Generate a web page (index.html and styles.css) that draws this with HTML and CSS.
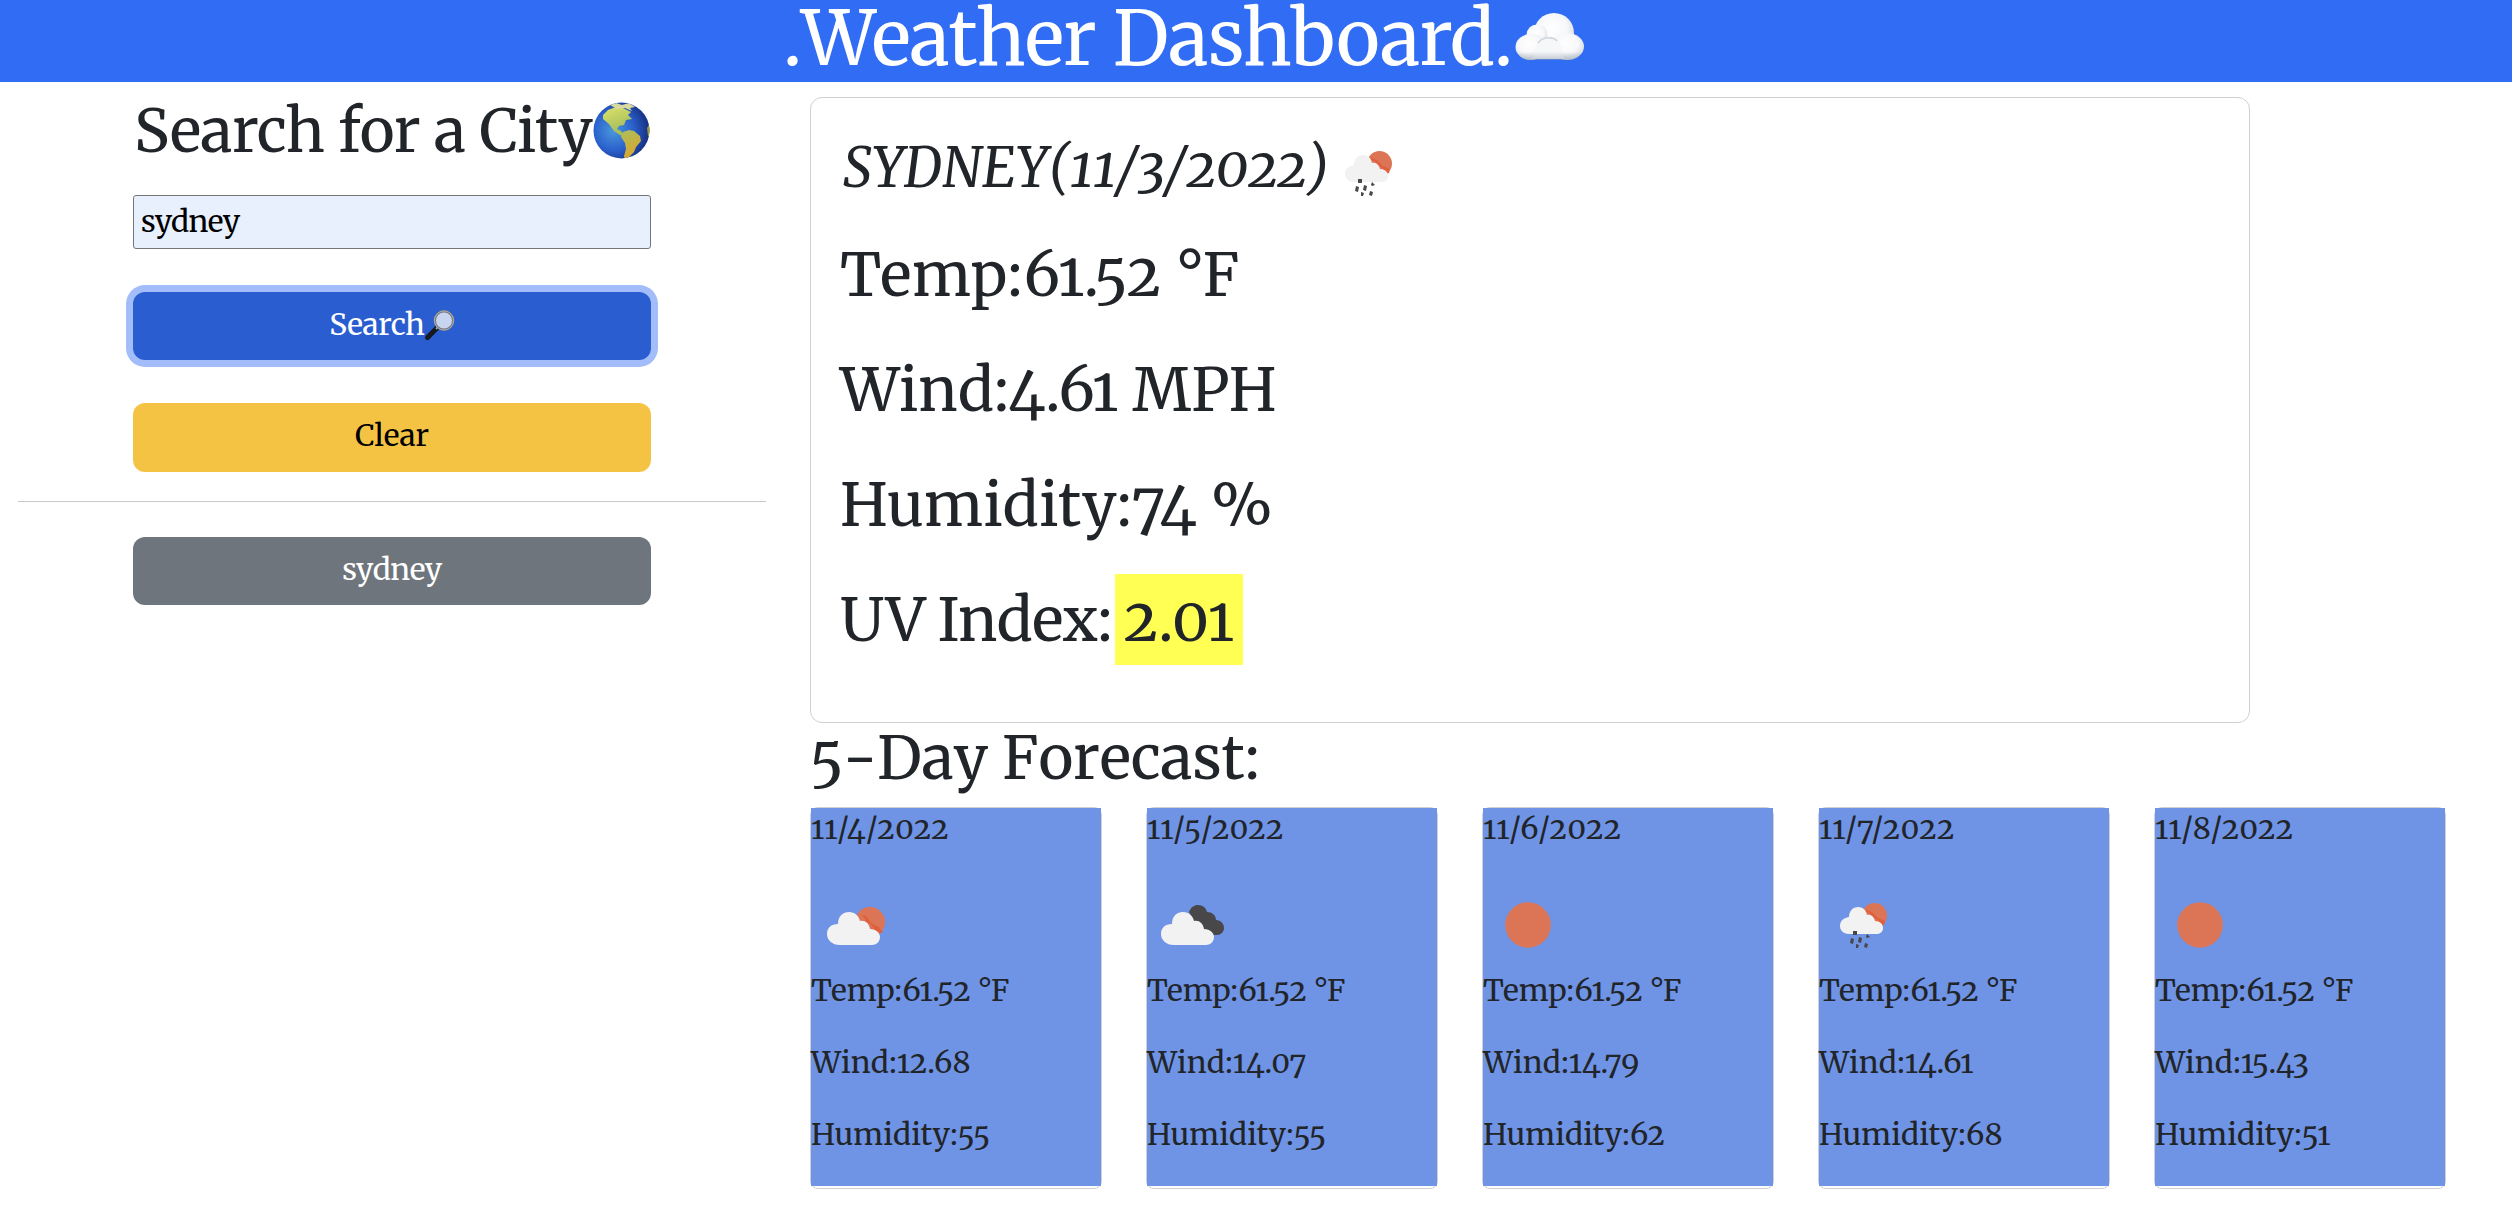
FILE: index.html
```html
<!DOCTYPE html>
<html lang="en">
<head>
<meta charset="utf-8">
<title>Weather Dashboard</title>
<link rel="stylesheet" href="styles.css">
</head>
<body>
<svg class="defs" aria-hidden="true">
  <defs>
    <radialGradient id="puff" cx=".45" cy=".4" r=".62"><stop offset="0" stop-color="#fff"/><stop offset=".6" stop-color="#f7f8fa"/><stop offset="1" stop-color="#d6dce2"/></radialGradient>
    <linearGradient id="shade" x1="0" y1="0" x2="0" y2="1"><stop offset=".5" stop-color="#8d9aa8" stop-opacity="0"/><stop offset="1" stop-color="#8d9aa8" stop-opacity=".5"/></linearGradient>
    <radialGradient id="ocean" cx=".36" cy=".5" r=".65"><stop offset="0" stop-color="#4a98dc"/><stop offset=".55" stop-color="#2a60cc"/><stop offset="1" stop-color="#152d7c"/></radialGradient>
    <linearGradient id="land" x1="0" y1="0" x2=".3" y2="1"><stop offset="0" stop-color="#dde26a"/><stop offset=".5" stop-color="#a9c05c"/><stop offset="1" stop-color="#d5a936"/></linearGradient>
    <clipPath id="disc"><circle cx="28.5" cy="28.5" r="28"/></clipPath>
    <symbol id="cloud" viewBox="0 0 58 38"><path fill="#f2f2f2" d="M13 38C5 38 0 33 0 27c0-6 4-10 11-10C11 9 16 5 22 5c6 0 10 4 11 9 5-1 9 2 10 8 6 0 10 4 10 8 0 5-4 8-8 8z"/></symbol>
    <symbol id="rain-sun" viewBox="0 0 48 46"><circle cx="34.5" cy="13.5" r="12.5" fill="#dc7556"/><path fill="#e05f3c" d="M23 10c5-1 8 2 9 6 5 0 7 3 8 8l4-1 1-4-7-3-6-6-6-2z"/><path fill="#f2f2f2" d="M9 32c-6 0-9-4-9-8 0-5 3-8 9-9 0-6 4-10 9-10s8 3 9 8c4-1 7 2 8 6 5 0 8 3 8 7s-3 6-7 6z"/><g fill="#48484a"><path d="M13 29h4v4h-4z"/><path d="m11 36 3 1-1 5-3-1z"/><path d="m19 35 3 1-1 5-3-1z"/><path d="m27 32 3 3-3 1-1-1z"/><path d="m16 42 3 1-1 3h-2z"/><path d="m25 41 3 1-1 4-3-1z"/></g></symbol>
  </defs>
</svg>

<header class="header">
  <h1 class="title"><span>.</span><span>Weather Dashboard.</span></h1>
  <svg class="cloud-emoji" viewBox="5 7 70 49"><circle cx="44" cy="28" r="20" fill="url(#puff)"/><circle cx="27" cy="30" r="10.500" fill="url(#puff)"/><path fill="#f3f5f7" d="M19 36h42v18H19z"/><ellipse cx="21" cy="42" rx="15.500" ry="13" fill="url(#puff)"/><ellipse cx="57" cy="41.500" rx="17" ry="13.500" fill="url(#puff)"/><path fill="#f6f7f9" d="M27 38c4-6 18-7 23-1l4 17H22z"/><path d="M28 38c4-6 15-7 19-2" fill="none" stroke="#ccd3da" stroke-width="1.500"/><path fill="url(#shade)" d="M6 38h68c1 9-5 17-15 17H20C10 55 5 48 6 38z"/></svg>
</header>

<main class="page">
  <aside class="sidebar">
    <div class="search">
      <h2 class="heading">Search for a City<svg class="globe" viewBox="0 0 57 57"><circle cx="28.5" cy="28.5" r="28" fill="url(#ocean)"/><g clip-path="url(#disc)"><path fill="url(#land)" d="M10 13l5-5 8-3 7 1 8 4-3 3 4 4-6 1-2 5-5 1-2 3 4 2 3 4 4 2-2 1-6-3-6-4-5-7-6-5zM30 30l6-2 5 1 6 5 1 5-5 6-2 5-5 5-4 3-1-4 2-7-1-6-4-6z"/><path fill="#d8d9a0" d="M17 3l6-2 6 2 7-2 6 4-5 1 2 3-7-3-8 1z"/><path fill="#9b9a34" d="M57 21l-3 5 1 8 3 1z"/></g></svg></h2>
      <input class="city-input" type="text" value="sydney" aria-label="City">
      <button class="btn btn-search">Search<svg class="glass" viewBox="0 0 30 30"><path d="M2.500 27.500 12 18" stroke="#16191d" stroke-width="5" stroke-linecap="round"/><path d="m11 19 3-3" stroke="#9ba1a8" stroke-width="2"/><circle cx="19" cy="10.500" r="9.200" fill="#c8d5f0" stroke="#777b82" stroke-width="2.400"/><circle cx="19" cy="10.500" r="9.600" fill="none" stroke="#b9b9b9" stroke-width=".8"/></svg></button>
      <button class="btn btn-clear">Clear</button>
    </div>
    <hr class="rule">
    <button class="btn btn-history">sydney</button>
  </aside>

  <div class="results">
    <section class="current">
      <h3 class="place">SYDNEY(11/3/2022)<svg class="now-icon"><use href="#rain-sun"/></svg></h3>
      <p class="reading temp"><span>Temp:</span><span>61.52 °F</span></p>
      <p class="reading wind"><span>Wind:</span><span>4.61 MPH</span></p>
      <p class="reading humidity"><span>Humidity:</span><span>74 %</span></p>
      <p class="reading uv"><span>UV Index:</span><span class="uv-value">2.01</span></p>
    </section>

    <h2 class="forecast-title">5-Day Forecast:</h2>
    <section class="forecast">
      <article class="day"><div class="day-body">
        <p class="date">11/4/2022</p>
        <svg class="icon" viewBox="0 0 90 86"><circle cx="59" cy="42" r="15" fill="#dc7556"/><path fill="#e05f3c" d="M46 33c6 1 8 5 9 9 5 1 8 5 9 10l8 1-4-6-8-4-5-7z"/><use href="#cloud" x="16" y="27" width="58" height="38"/></svg>
        <p class="fact"><span>Temp:</span><span>61.52 °F</span></p><p class="fact"><span>Wind:</span><span>12.68</span></p><p class="fact"><span>Humidity:</span><span>55</span></p>
      </div></article>
      <article class="day"><div class="day-body">
        <p class="date">11/5/2022</p>
        <svg class="icon" viewBox="0 0 90 86"><path fill="#48484a" d="M42 32c2-5 5-7 9-7 5 0 8 3 9 7 5 0 9 3 9 8 5 0 8 4 8 8s-3 7-7 7H54z"/><use href="#cloud" x="14" y="27" width="58" height="38"/></svg>
        <p class="fact"><span>Temp:</span><span>61.52 °F</span></p><p class="fact"><span>Wind:</span><span>14.07</span></p><p class="fact"><span>Humidity:</span><span>55</span></p>
      </div></article>
      <article class="day"><div class="day-body">
        <p class="date">11/6/2022</p>
        <svg class="icon" viewBox="0 0 90 86"><circle cx="45" cy="45" r="22.8" fill="#dc7556"/></svg>
        <p class="fact"><span>Temp:</span><span>61.52 °F</span></p><p class="fact"><span>Wind:</span><span>14.79</span></p><p class="fact"><span>Humidity:</span><span>62</span></p>
      </div></article>
      <article class="day"><div class="day-body">
        <p class="date">11/7/2022</p>
        <svg class="icon" viewBox="0 0 90 86"><use href="#rain-sun" x="21" y="22" width="48" height="46"/></svg>
        <p class="fact"><span>Temp:</span><span>61.52 °F</span></p><p class="fact"><span>Wind:</span><span>14.61</span></p><p class="fact"><span>Humidity:</span><span>68</span></p>
      </div></article>
      <article class="day"><div class="day-body">
        <p class="date">11/8/2022</p>
        <svg class="icon" viewBox="0 0 90 86"><circle cx="45" cy="45" r="22.8" fill="#dc7556"/></svg>
        <p class="fact"><span>Temp:</span><span>61.52 °F</span></p><p class="fact"><span>Wind:</span><span>15.43</span></p><p class="fact"><span>Humidity:</span><span>51</span></p>
      </div></article>
    </section>
  </div>
</main>
</body>
</html>
```
FILE: styles.css
```css
* { box-sizing: border-box; }
body {
  margin: 0;
  background: #fff;
  color: #212529;
  font-family: Merriweather, "DejaVu Serif Condensed", "DejaVu Serif", serif;
  font-size: 30px;
  font-variant-numeric: oldstyle-nums;
}
h1, h2, h3, p { margin: 0; font-weight: 400; white-space: nowrap; }
svg { display: block; flex: none; overflow: visible; }
.defs { width: 0; height: 0; float: left; }

.header {
  display: flex;
  height: 82px;
  padding-left: 783px;
  background: #316cf4;
  color: #fff;
}
.title { display: flex; width: 732px; font-size: 74.5px; line-height: 77px; letter-spacing: -.009em; }
.cloud-emoji { width: 70px; height: 49px; margin-top: 12px; }

.page { display: grid; grid-template-columns: 784px 1fr; }

.sidebar { display: flex; flex-direction: column; align-items: center; padding: 13px 18px 0; }
.search { display: flex; flex-direction: column; width: 518px; }
.heading {
  display: flex;
  justify-content: space-between;
  padding: 0 1px;
  font-size: 59.5px;
  line-height: 71px;
  letter-spacing: -.006em;
}
.globe { width: 57px; height: 57px; margin-top: 7px; }
.city-input {
  height: 54px;
  margin: 29px 0 43px;
  padding: 0 7px 3px;
  border: 1px solid #767676;
  border-radius: 3px;
  background: #e8f0fe;
  color: #000;
  font: inherit;
  line-height: 49px;
  letter-spacing: -.024em;
}
.btn {
  display: flex;
  justify-content: center;
  width: 518px;
  height: 68px;
  padding: 0 0 3px;
  border: 0;
  border-radius: 12px;
  font: inherit;
  line-height: 65px;
}
.btn-search { background: #2a5dd0; color: #fff; box-shadow: 0 0 0 7px #a3bdfa; letter-spacing: -.01em; }
.glass { width: 30px; height: 30px; margin-top: 18px; }
.btn-clear { height: 69px; margin-top: 43px; padding-bottom: 2px; background: #f5c344; color: #000; }
.rule { align-self: flex-start; width: 748px; height: 1px; margin: 29px 0 35px; border: 0; background: #c8c9ca; }
.btn-history { background: #6e757c; color: #fff; letter-spacing: -.018em; }

.results { padding: 15px 0 0 26px; }
.current {
  width: 1440px;
  height: 626px;
  padding: 33px 0 0 30px;
  border: 1px solid #d0d0d1;
  border-radius: 12px;
}
.place {
  display: flex;
  height: 98px;
  padding-left: 2px;
  font-size: 54px;
  font-style: italic;
  font-kerning: none;
  line-height: 75px;
  letter-spacing: .005em;
}
.now-icon { width: 48px; height: 46px; margin: 19px 0 0 15px; }
.reading { display: flex; height: 91px; margin-bottom: 24px; margin-left: -1px; font-size: 59.5px; line-height: 91px; }
.temp { letter-spacing: .012em; }
.wind { letter-spacing: .001em; }
.humidity { letter-spacing: .006em; }
.uv { letter-spacing: -.014em; }
.uv-value { width: 128px; margin-left: 3px; padding-left: 9px; background: #ffff54; letter-spacing: .01em; }

.forecast-title { font-size: 59.5px; line-height: 69px; font-kerning: none; letter-spacing: -.002em; }
.forecast { display: grid; grid-template-columns: repeat(5, 292px); column-gap: 44px; margin-top: 15px; }
.day { height: 382px; border: 1px solid #d0d0d1; border-radius: 8px; }
.day-body { height: 378px; background: #6f94e6; }
.date { font-size: 30px; line-height: 41px; letter-spacing: .028em; }
.icon { width: 90px; height: 86px; margin-top: 31px; }
.fact { display: flex; margin-bottom: 24px; line-height: 48px; letter-spacing: .004em; }
```
